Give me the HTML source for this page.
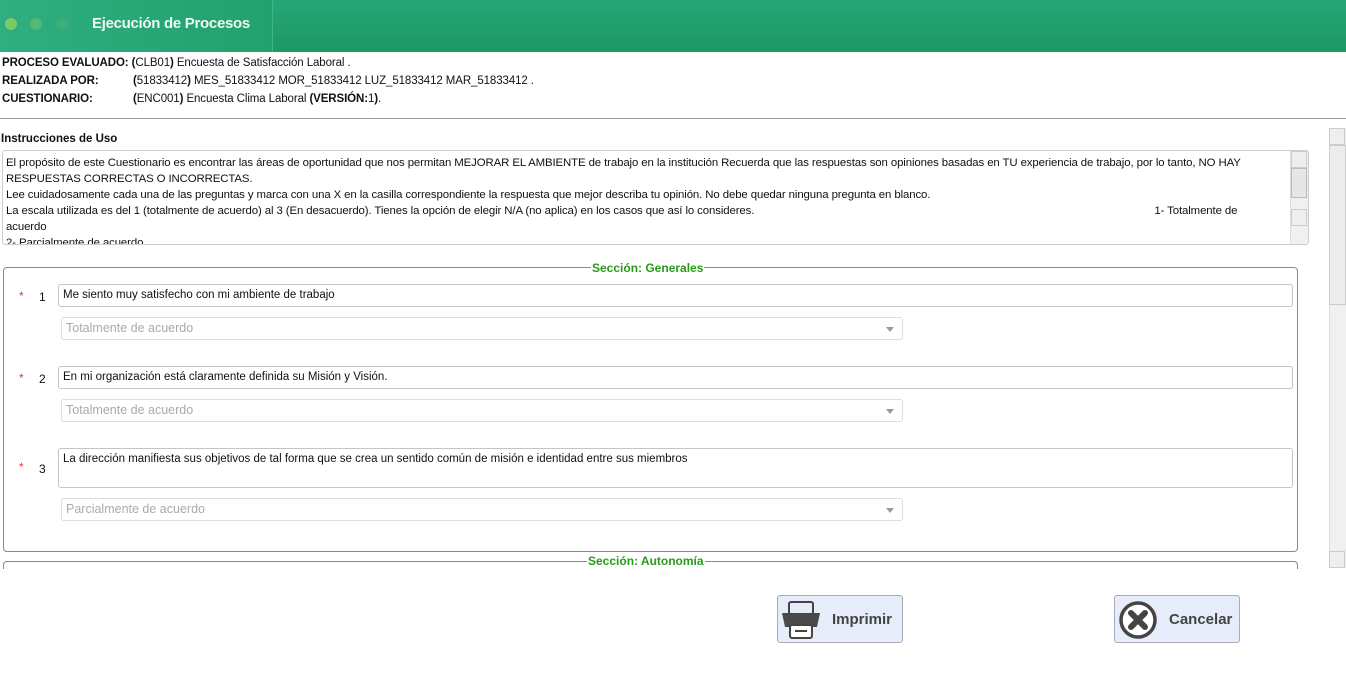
<!DOCTYPE html>
<html><head><meta charset="utf-8"><style>
*{box-sizing:border-box;margin:0;padding:0}
body{width:1346px;height:674px;overflow:hidden;background:#fff;font-family:"Liberation Sans",sans-serif;font-size:11.5px;color:#111;position:relative}
.abs{position:absolute}
.hdr{left:0;top:0;width:1346px;height:52px;background:linear-gradient(#26a676,#1c9964)}
.hdrl{left:0;top:0;width:273px;height:52px;background:linear-gradient(90deg,#2fae80,#22a16e);border-right:1px solid #3cb688}
.dot{width:12px;height:12px;border-radius:6px;top:18px}
.info{left:2px;font-size:11.5px;white-space:nowrap;letter-spacing:-0.1px}
.info b{display:inline-block}
.box{border:1px solid #ccc;border-radius:3px;background:#fff}
.sel{border:1px solid #ddd;border-radius:3px;color:#aaa;font-size:12.5px;padding:3px 4px;height:23px}
.sel:after{content:"";position:absolute;right:8px;top:9px;border:4px solid transparent;border-top:5px solid #999}
.inp{border:1px solid #c4c4c4;border-radius:3px;padding:4px 4px;font-size:11.5px}
.fs{border:1px solid #888;border-radius:4px}
.lg{color:#2a9a1a;font-weight:bold;background:#fff;padding:0 1px;font-size:12px}
.ast{color:#e33;font-size:12px}
.num{font-size:12px}
.btn{border:1px solid #aab;border-radius:3px;background:#e6ecf9;height:48px;width:126px;font-weight:bold;font-size:15px;color:#444}
.sb{background:#f0f0f0;border-left:1px solid #ddd}
.arr{width:16px;height:17px;background:#eee;border:1px solid #ccc}
</style></head><body>
<div class="abs hdr"></div>
<div class="abs hdrl"></div>
<div class="abs dot" style="left:5px;background:#7cc96a"></div>
<div class="abs dot" style="left:30px;background:#52b878"></div>
<div class="abs dot" style="left:56px;background:#3aaf7a"></div>
<div class="abs" style="left:92px;top:15px;color:#eef8f2;font-weight:bold;font-size:15px;letter-spacing:-0.3px">Ejecución de Procesos</div>

<div class="abs info" style="top:57px"><b>PROCESO EVALUADO:</b> <b>(</b>CLB01<b>)</b> Encuesta de Satisfacción Laboral .</div>
<div class="abs info" style="top:75px"><b style="width:131px">REALIZADA POR:</b><b>(</b>51833412<b>)</b> MES_51833412 MOR_51833412 LUZ_51833412 MAR_51833412 .</div>
<div class="abs info" style="top:93px"><b style="width:131px">CUESTIONARIO:</b><b>(</b>ENC001<b>)</b> Encuesta Clima Laboral <b>(VERSIÓN:</b>1<b>)</b>.</div>
<div class="abs" style="left:0;top:118px;width:1346px;height:1px;background:#999"></div>

<div class="abs" style="left:1px;top:133px;font-weight:bold">Instrucciones de Uso</div>
<div class="abs box" style="left:2px;top:150px;width:1307px;height:95px;overflow:hidden;padding:4px 3px;line-height:16px;font-size:11.4px;letter-spacing:-0.1px">
<div style="width:1280px">El propósito de este Cuestionario es encontrar las áreas de oportunidad que nos permitan MEJORAR EL AMBIENTE de trabajo en la institución Recuerda que las respuestas son opiniones basadas en TU experiencia de trabajo, por lo tanto, NO HAY RESPUESTAS CORRECTAS O INCORRECTAS.<br>Lee cuidadosamente cada una de las preguntas y marca con una X en la casilla correspondiente la respuesta que mejor describa tu opinión. No debe quedar ninguna pregunta en blanco.<br>La escala utilizada es del 1 (totalmente de acuerdo) al 3 (En desacuerdo). Tienes la opción de elegir N/A (no aplica) en los casos que así lo consideres.<span style="margin-left:400px">1- Totalmente de</span><br>acuerdo<br>2- Parcialmente de acuerdo</div>
<div class="abs sb" style="left:1287px;top:0;width:18px;height:93px"></div>
<div class="abs arr" style="left:1288px;top:0"></div>
<div class="abs" style="left:1288px;top:17px;width:16px;height:30px;background:#e6e6e6;border:1px solid #bbb"></div>
<div class="abs arr" style="left:1288px;top:58px"></div>
</div>

<div class="abs sb" style="left:1329px;top:128px;width:17px;height:440px"></div>
<div class="abs arr" style="left:1329px;top:128px"></div>
<div class="abs" style="left:1329px;top:145px;width:17px;height:160px;background:#ececec;border:1px solid #ccc"></div>
<div class="abs arr" style="left:1329px;top:551px"></div>

<div class="abs fs" style="left:3px;top:267px;width:1295px;height:285px"></div>
<div class="abs lg" style="left:591px;top:261px">Sección: Generales</div>

<div class="abs ast" style="left:19px;top:289px">*</div><div class="abs num" style="left:39px;top:290px">1</div>
<div class="abs inp" style="left:58px;top:284px;width:1235px;height:23px">Me siento muy satisfecho con mi ambiente de trabajo</div>
<div class="abs sel" style="left:61px;top:317px;width:842px">Totalmente de acuerdo</div>

<div class="abs ast" style="left:19px;top:371px">*</div><div class="abs num" style="left:39px;top:372px">2</div>
<div class="abs inp" style="left:58px;top:366px;width:1235px;height:23px">En mi organización está claramente definida su Misión y Visión.</div>
<div class="abs sel" style="left:61px;top:399px;width:842px">Totalmente de acuerdo</div>

<div class="abs ast" style="left:19px;top:460px">*</div><div class="abs num" style="left:39px;top:462px">3</div>
<div class="abs inp" style="left:58px;top:448px;width:1235px;height:40px">La dirección manifiesta sus objetivos de tal forma que se crea un sentido común de misión e identidad entre sus miembros</div>
<div class="abs sel" style="left:61px;top:498px;width:842px">Parcialmente de acuerdo</div>

<div class="abs fs" style="left:3px;top:561px;width:1295px;height:20px"></div>
<div class="abs" style="left:0;top:569px;width:1346px;height:105px;background:#fff"></div>
<div class="abs lg" style="left:587px;top:554px">Sección: Autonomía</div>

<div class="abs btn" style="left:777px;top:595px">
<svg class="abs" style="left:3px;top:5px" width="40" height="38" viewBox="0 0 40 38"><rect x="8" y="1" width="24" height="12" rx="2" fill="none" stroke="#444" stroke-width="2"/><path d="M1 12h38l-3 14H4z" fill="#4a4a4a"/><rect x="9" y="24" width="22" height="13" rx="2" fill="#fff" stroke="#444" stroke-width="2"/><path d="M14 30h12" stroke="#444" stroke-width="2"/></svg>
<span class="abs" style="left:54px;top:15px">Imprimir</span></div>
<div class="abs btn" style="left:1114px;top:595px">
<svg class="abs" style="left:3px;top:4px" width="40" height="40" viewBox="0 0 40 40"><circle cx="20" cy="20" r="17" fill="#fff" stroke="#444" stroke-width="3.5"/><path d="M13 13l14 14M27 13L13 27" stroke="#444" stroke-width="6" stroke-linecap="round"/></svg>
<span class="abs" style="left:54px;top:15px">Cancelar</span></div>
</body></html>
